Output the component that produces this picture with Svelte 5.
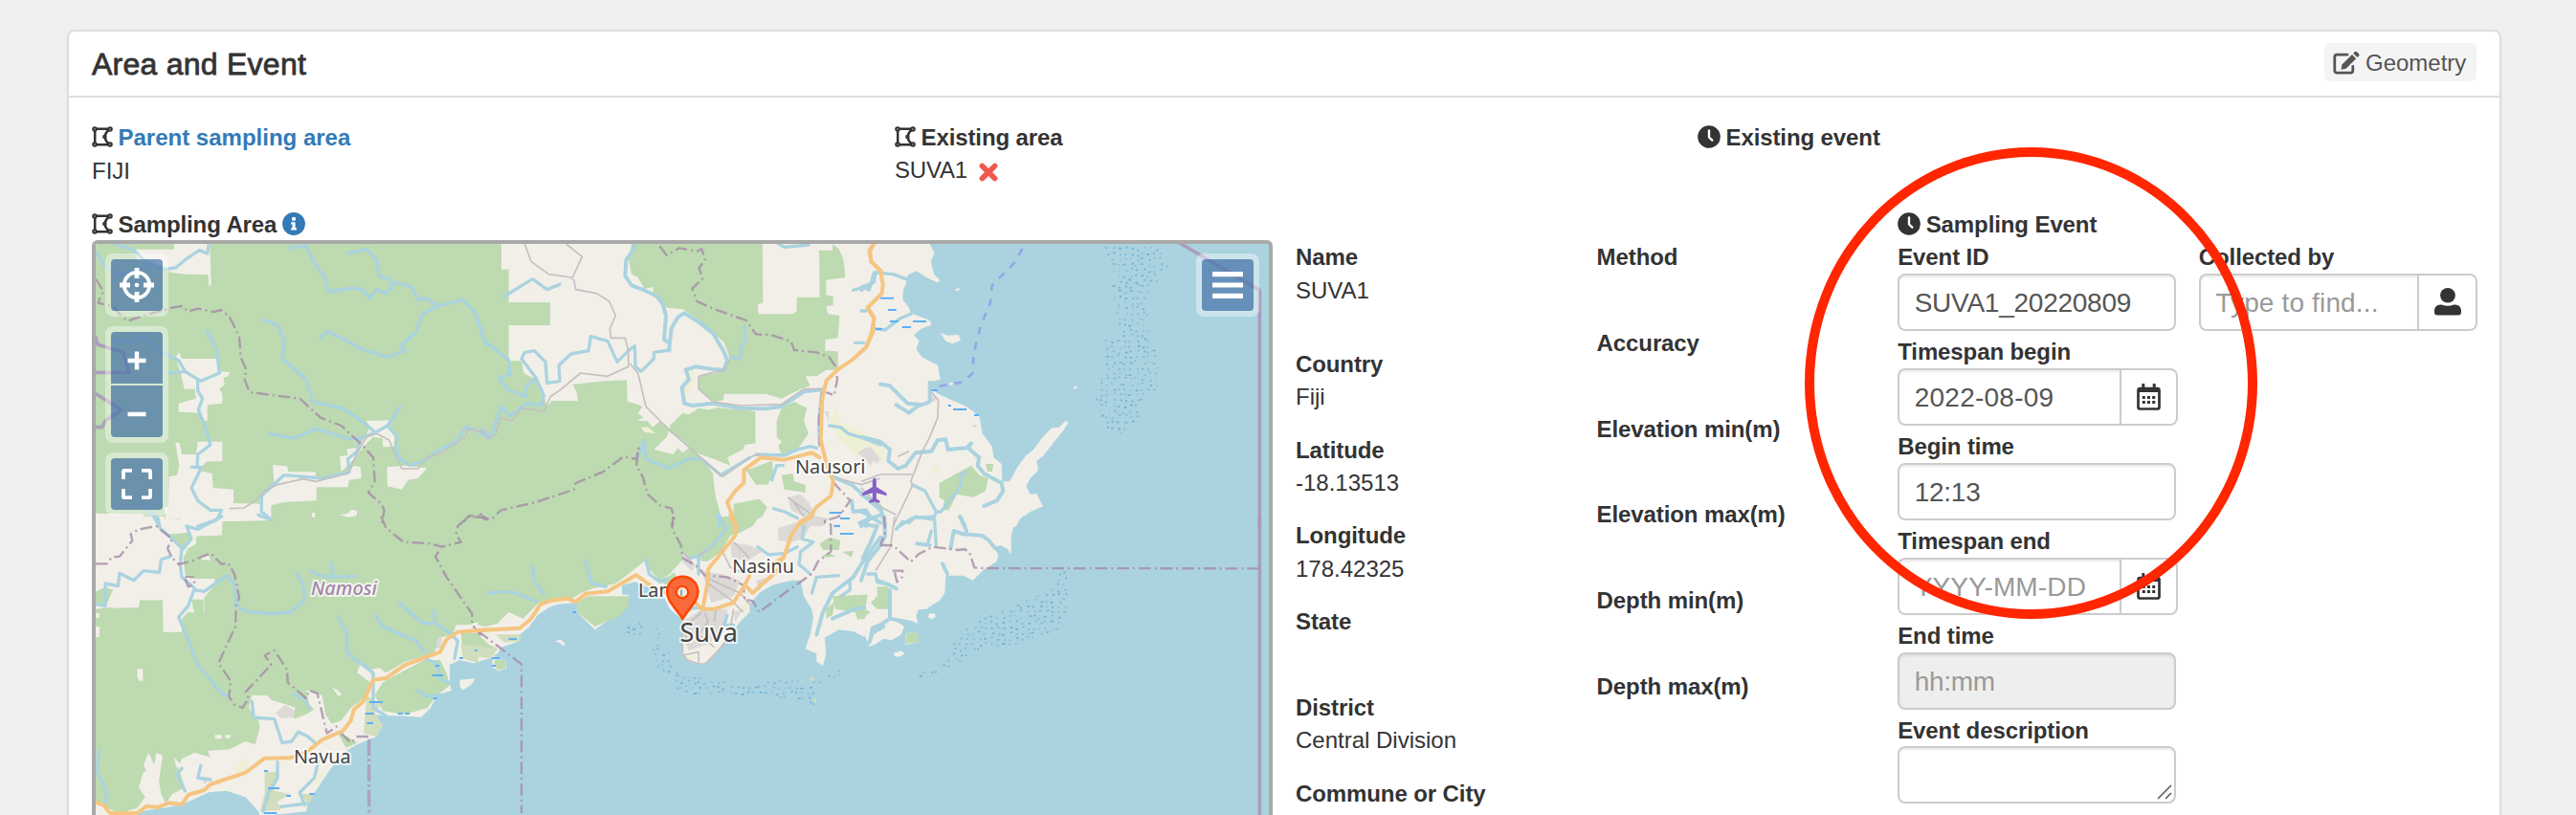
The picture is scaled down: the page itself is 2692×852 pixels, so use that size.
<script>
  // Each map tile has its own drawing grid at three units per pixel.
  const tiles = { A: [90, 240], B: [500, 240], C: [900, 240], D: [90, 540], E: [500, 540], F: [900, 540] };

  const layers = [
    { kind: 'land', shapes: {
      A: 'M0 0H1260V930H0Z',
      B: 'M0 0H1210V930H0Z',
      C: 'M-10 0H215V45L230 75L218 100L228 140L248 160L238 166L205 150L172 130L145 143L140 170L132 190L130 220L150 245L155 262L215 285L220 300L190 310L165 330L182 350L172 375L190 400L240 425L248 470L215 478L225 505L250 520L330 555L370 585L380 640L410 680L415 715L440 735L442 790L465 790L490 745L515 710L540 690L570 650L597 622L620 620L640 600L650 605L630 635L605 665L570 710L550 725L555 755L530 780L517 805L530 830L550 828L560 850L570 868L530 885L500 905L484 932H-10Z M248 323L270 332L305 330L312 348L285 358L265 350Z M275 480L288 480L286 488L276 488Z M667 491H676V499H667Z M295 186L310 184L308 190L296 192Z',
      D: 'M0 0H1280V440L1215 460L1170 450L1140 465V520L1145 545L1100 560L1080 600L1050 630L990 625L930 625L905 620L930 655L910 690L850 715L815 735L790 760L760 800L720 860L695 895L690 925L545 940L540 925L500 880L440 860L385 865L320 895L270 910L200 920L120 936H0Z M1172 512L1220 508L1210 525L1180 545L1172 532Z',
      E: 'M0 -5H1210V378L1205 375L1175 360L1130 355L1085 380L1090 430L1080 468L1060 455V430L1025 415L1040 370L1050 320L1045 290L1020 250L1010 200L980 200L920 215L880 240L850 275V300L820 330L790 370L765 400L730 445L700 465L660 455L640 430V325L600 290L580 250L540 225L490 205L450 215V245L470 245V270L440 310L400 330L365 355L330 320L310 300V270L250 275L220 285L185 310L160 345L130 370V390L70 410L60 430L30 445L0 440Z M240 390L258 386L272 398L268 406L254 396Z M45 448L85 450L88 475L65 485L42 472Z',
      F: 'M-5 -5H508L480 25L470 60L470 118L455 98L415 96L430 120L425 140L380 170L350 200L320 185L265 185L262 240L245 265L225 275L205 290L180 292L172 310L178 335L150 325L105 325L135 345L125 370L95 388L70 383L45 400L25 408L10 370L-5 370Z M212 305L230 303L233 315L220 322L210 316Z M102 428L125 421L137 430L120 440L104 438Z M140 370L160 360L180 370L178 393L137 403Z'
    } },
    { kind: 'forest', shapes: {
      A: 'M0 0H1231V901H0Z',
      B: 'M-1 0H65L72 60V125H95V228H225V300H95V412H135L142 450L180 470L205 520L215 555L230 537H312L308 510L295 485L400 475L465 472L467 540L490 545L515 555L500 575L518 590L495 600L530 600L545 620L570 600L600 625L590 650L550 690L610 705L625 685L640 700L660 685L700 715L735 765L742 830L760 901H-1Z M490 0H890L892 230L875 235L878 265H985L998 255V212H1070L1068 65L1110 65V45L1130 60L1145 95L1150 150L1090 158V205L1112 210V237L1090 240L1095 265L1132 270L1127 340L1087 345V380L1127 382V440L1090 440L1060 460L1025 460L1040 490L1010 500L950 530L900 515L770 515L768 535L740 540L690 500L692 460L750 450L790 410L770 355L700 290L640 250L590 245L570 215L545 200L550 180L520 185L500 150L480 140L470 90Z M600 615L640 575L660 580L690 560L720 565L750 558L868 570V670L835 675L830 690L780 715L790 740L740 720L680 700L640 660L600 635Z M935 600L950 560L990 540L1030 560L1020 600L1035 640L1000 690L950 705L940 680L950 665L935 650Z M840 755L920 725L925 770L905 800L870 800Z M800 860L880 845L905 870L890 900L830 930L800 915Z M950 770L985 765L990 790L1025 800L1025 825L960 815Z',
      C: 'M245 795L300 765L345 740L370 770L398 780L390 820L350 840L300 830L275 880L255 880L260 850L245 840Z M390 735L415 735L410 760L395 758Z',
      D: 'M428 15L535 10V0H1231V330L1200 340L1160 340L1150 370L1110 380L1090 430L1000 455L940 490L920 475L890 480L860 460L850 490L890 520L870 570L830 600L800 640L770 650L750 620L740 560L690 545L700 590L715 605L690 620L650 635L655 600L630 590L580 575L570 562L520 560L510 600L540 640L545 660L530 715L500 705L450 730L380 735L390 755L340 740L300 760L290 790L310 850L270 870L250 900L235 870L228 830L240 750L220 740L210 800L180 800L165 850L185 880L160 915L100 930L70 915L30 890V290L70 285H165L168 262H240L242 362H300L300 320L320 300L370 305V255L395 225L405 195L340 195L310 180L305 130L320 100L345 85V60L425 58Z M260 55L320 50L330 70L310 95L285 90Z M30 235L60 220L85 230L65 275L30 270Z M330 260H368V305H340Z M245 -2H300V8H248Z M930 520L1060 450L1110 450L1130 490L1140 530L1100 560L1070 600L1000 620L930 610L905 560Z M1175 365H1231V430L1180 420Z M790 680L820 690L850 710L815 725Z',
      E: 'M-1 0H880L860 30L820 50L790 60L760 110L720 140L700 140L690 120L640 135L600 180L570 200L540 170L520 140L470 180L430 210L360 225L320 240L290 260L240 255L190 270L140 320L95 300L60 335L20 345L-1 340Z M310 270L340 250H470V280L440 315L400 330L365 345L310 300Z M-1 370L30 400L60 415L40 440L-1 435Z M50 450H85V475L65 482L50 470Z M1070 85L1100 65L1135 75L1130 105L1080 105Z M1080 120L1100 115L1120 125L1085 128Z M1140 110L1175 108L1170 128Z M1110 250L1210 245V290L1230 300L1190 325L1180 300L1120 290Z M1090 290L1118 265L1110 310L1090 320Z M570 205L615 175L620 190L590 215Z',
      F: 'M-1 245H20L15 280L-1 290Z M30 270L50 250L50 220L85 220L93 290L50 290Z M-1 295L20 300L10 322H-1Z M142 370L160 360L180 370L178 393L137 400Z'
    } },
    { kind: 'swamp', shapes: {
      D: 'M880 560L925 590L905 615L930 655L910 690L870 680Z M560 800L600 800L590 860L640 870L600 895L610 920L545 925L560 870Z M670 870L715 870L700 900L680 885Z M1175 400L1230 405V460L1180 445Z',
      E: 'M0 405L60 415L40 445L0 440Z M55 370L130 370V390L80 395Z M1040 503L1052 503V516L1040 514Z M1050 570H1060V582H1052Z'
    } },
    { kind: 'pale', shapes: {
      B: 'M655 450L680 440L672 480L650 540L640 500Z M1100 590L1125 550L1135 600L1230 650L1260 660L1230 685L1190 710L1130 660Z M510 620L530 618L555 640L520 635Z M145 195L165 198L158 208Z',
      C: 'M0 650L60 670L75 700L70 735L40 700L0 680Z M225 740L245 745L240 765L222 760Z',
      D: 'M460 790L500 760L515 770L490 800L465 805Z M710 850L730 800L750 805L715 855Z',
      E: 'M815 280L840 270L848 280L835 300L815 302Z M650 430L685 440L670 450L655 445Z M775 85L785 80V95Z'
    } },
    { kind: 'clear', shapes: {
      A: 'M275 45H388L392 175L385 178L382 142L320 140L265 135L240 115L160 95L155 62L275 62Z M300 405H410L418 445L450 447L445 460L430 465L435 485L418 500L427 515V545L380 550V600L365 600L360 575L290 572V545L345 530L340 500L308 500L300 465L290 430L280 400L292 385Z M280 668H293L300 705H345L350 665H427V727H380L360 745L350 755L395 765L398 810L462 815V858L545 860V835L590 800L585 738L630 742L635 760L720 760L718 782L790 775L830 755L838 740L860 745L863 780L825 785L820 808H722V850L620 855L580 865V912L470 915H425V935L300 935L298 905L250 910L245 870H258L260 775L285 770L292 740Z M795 710L820 708L818 688L850 685L870 660L890 620L878 600L950 598L955 620L968 640L965 680L930 682V655L900 650L870 680L830 730L800 760Z M943 745L1000 740L1070 748L1040 780L1010 785L990 815L945 805Z M30 890L175 893L215 930L250 935H30Z M795 895L820 890L832 878L850 882L848 898L825 902Z M708 888H718V902H708Z',
      D: 'M30 -1H245V8H300V-1H425V58L345 62V85L320 100L310 95L330 70L320 50L260 55L285 90L300 130V165L250 262H168L165 285L85 287L65 275L85 230L60 220L30 235Z M160 478H178V515H166L160 500Z M30 303H42V318H30Z M30 345H42V378H30Z M404 685H425V697H404Z M435 685H452V695H437Z M770 535L790 545L803 560L790 562Z M360 128L385 122L390 138L362 135Z M180 780L195 740L210 770L225 830L215 850Z M265 725L275 755L300 780L285 790Z'
    } },
    { kind: 'urban', shapes: {
      B: 'M970 840L1010 830L1035 855L1060 900L1100 905L1080 930L1000 930L1020 900L980 880Z M1190 700L1220 680L1240 720L1230 740Z M1085 570H1098V600Z',
      C: 'M10 690L30 680L60 720L50 735L20 710Z M215 520L235 525L230 540L218 540Z M348 612H362V620L352 622Z',
      D: 'M595 615L625 590L655 610L650 630L610 633Z M360 815L395 820L370 840Z M1100 380L1115 375V410L1098 415Z',
      E: 'M940 35L1010 15L1040 30L1020 70L980 80L940 75Z M790 80L850 90L890 110L840 140L795 130Z M700 170L760 180L820 200L800 250L730 270L715 220Z M640 330L700 290L780 290L770 350L720 400L660 420L640 380Z M870 200L910 190L880 235Z M800 300L830 290L805 330Z M640 110L680 150L670 170L640 145Z'
    } },
    { kind: 'river wide', shapes: {
      B: 'M490 45L485 65L463 95L460 145L480 175L520 190L560 210L578 235L588 270L582 345L597 355M597 380L605 310L625 275L645 262L690 290L735 325L768 380L780 410L770 440L735 438L680 430L650 440L660 470L638 495L645 545L670 552L735 545L820 560L900 562L950 555L1020 508L1078 502L1068 600L1070 670M1110 775L1170 800L1260 880M1170 850L1175 885L1215 880L1225 900L1200 930',
      C: 'M0 830L60 870L75 930M0 650L60 665L90 690L85 725L115 750L140 740L170 700L220 695L240 660L265 658L272 690L330 685L345 670L335 685L370 715L365 740L385 765L440 795L445 820L425 850L385 867M0 885L25 895L15 930M310 900L325 930M215 480V540L175 555L150 575L110 550M60 485L90 490L130 530L145 545L190 550',
      E: 'M1260 65L1200 150L1175 190L1110 240L1080 300L1060 370M1230 0L1260 20M1110 320L1180 290L1210 285M1260 -5L1195 20M1270 345L1235 365L1225 395',
      F: 'M0 200L20 140L60 90L75 60L72 0M0 25L50 30L30 80L5 130M90 230V320L140 330L90 320L60 340L35 350L30 380M310 0L330 45M280 100L290 45L320 55L380 60L400 75L420 100L440 97M255 148L270 180M175 85L215 90M50 200L90 215L110 226'
    } },
    { kind: 'river', shapes: {
      A: 'M92 45L150 65L180 95L240 125L280 120L310 95L355 65L380 75L385 45M30 70L60 115L90 135L120 140L200 110M640 58L690 50L712 100L745 145L760 195L840 183L870 190L888 215L910 188L940 200L970 165L1020 180L1040 220L1065 215L1105 240L1180 220L1220 260L1245 340L1260 365M820 75L880 62L912 95L918 145L950 155L960 185M735 340L755 318L800 340L865 375L945 400L1000 380L985 365L1035 320L1055 265L1110 235M555 283L600 300L622 350L615 405L690 470L710 540L800 560L850 590L900 630M575 640L650 655L720 625L820 655L860 655L910 635L945 615L985 555M378 317L410 380L418 450L360 475L310 445L260 450M90 350L150 350L180 330L220 375L290 410L310 445L350 470L350 505L365 530L352 565L370 610L390 675L350 705L348 745L360 750L330 810L350 850L390 880L425 880L410 910L350 930M330 745H360M1260 655L1225 630L1190 620L1160 665L1110 690L1060 725L1015 740L985 720L970 690L975 650L945 615M860 655L850 695L820 720L825 760L740 780L620 770L550 835L550 885L580 910M180 865L195 885L225 905L230 930',
      B: 'M80 210L170 155L215 188L255 172M-5 275L20 350L95 410L98 455L65 465L90 500L150 525L150 490L175 470M200 550L205 520L180 465L135 405L145 385L175 380L210 415L215 482L255 475L252 425L290 390L345 380L352 335L405 350L435 415L470 380L490 365L492 430L510 445L550 405L550 385L600 378M200 550L150 545L100 585L70 555L40 650L10 625M500 715L520 660L525 720L600 748L660 718L700 720L760 770L850 715M870 705L960 708L1000 690L1040 680L1060 685M1100 615L1135 620L1160 640L1210 655L1260 675M925 875L960 885L1000 905M920 785L935 740L955 740M750 895L755 930M1175 190L1210 180L1225 190L1240 135M1200 255L1215 255M790 400L820 405L822 370L838 350L835 305M940 45L960 55L1035 48M1180 355H1208',
      C: 'M0 190L40 165L45 135L100 140L140 155M40 310L75 315L120 280L155 265M0 180L30 170M160 800L200 820L235 885L250 885L285 840L315 800L310 770L330 760M235 885L230 900L160 905L120 930',
      D: 'M210 -5L235 40L270 70L300 100L295 150L300 190L340 225L320 280L290 315L325 400L350 465L430 560L440 560M425 0L350 40L315 30L330 70L305 100M265 125L235 135L230 175L180 170L150 200L105 178L100 218L60 210L60 280L30 275M340 230L370 235L440 185L465 210L470 280L500 297L580 305L640 300L685 260L680 210L660 180M705 170L730 185L775 190L845 187M768 145L775 190M790 315L815 360L820 430L900 490L900 600L940 625M905 310L930 345L1035 390L1060 425M980 270L1055 335L1095 335L1140 365L1165 390L1155 445M1090 295L1095 335M520 580L525 630L590 635L615 710L645 705L665 675L695 690L720 712M735 740L715 820L670 865L685 905M650 558L685 575L700 600M40 735L35 800L65 860L60 895M300 790L285 810L310 860M360 780L350 820L390 825M1060 445L1100 460L1110 510L1150 525M1040 545L1070 565L1110 560M600 770L600 820L570 870L555 925M610 910L690 900M540 -5L580 10',
      E: 'M755 -5L775 40L735 90L690 125L660 130M525 135L535 180L570 205L590 195M170 155L175 200L205 245M30 240L100 235L180 265M335 140L355 210L400 220M690 125L690 180M875 95L910 120L960 115L1000 95M1020 30L1015 70L1050 80L1010 110L1005 150L1040 180M1130 185L1060 190L1045 240M640 310L660 290L690 285M780 310L770 340L800 340M1165 205V230L1135 250',
      F: 'M110 40L130 15L150 20L170 0L230 10L235 90M220 45L210 80M20 180L45 180L50 205L90 215'
    } },
    { kind: 'street', shapes: {
      A: 'M450 875L495 873L530 850L560 820L600 800L680 782L720 790L820 765L850 700L880 650L910 640L950 660L970 710L990 750L1040 750L1070 715L1115 700L1190 650L1195 625L1245 635L1260 655',
      B: 'M10 630L35 655L55 640L70 590L105 600L135 560L205 570L225 525L260 500L320 450L405 460L470 430L470 380L460 340L415 340L412 310L430 270L410 225L370 200L305 188L300 160L290 150L220 140L165 100L145 45M275 45L325 85L295 150M475 420L500 450L525 555L600 630L680 700L765 775L860 710L885 705M690 460L770 440L790 405M690 460V500L735 540L820 552L950 548L1020 500L1078 500M1125 780L1200 800L1260 780M970 840L1040 890M985 850L1020 900',
      C: 'M220 510L242 535L240 590L215 650L190 700L155 790L162 800L100 930M0 790L60 768H160M0 810L60 870L110 895M150 695L115 712',
      E: 'M640 330L640 430L655 450L690 462H712L770 400L790 350L800 290M640 435L690 425V460M660 400L640 350L700 300M710 300L720 330L690 370L740 410M745 285L740 330M720 210L790 260L830 300M710 190L820 240L850 275M760 100L790 160L840 180M800 80L850 130M640 110L670 145M690 120L730 100',
      F: 'M105 0L92 95L45 170'
    } },
    { kind: 'border', shapes: {
      A: 'M30 155L55 195L45 210L38 230L85 240L105 265L130 287L180 270L270 245L300 240L320 257L350 248L400 258L425 252L450 275L480 335L485 400L502 440L497 470L512 510L670 530L735 590L800 615L870 680L900 715L905 790L885 825L925 860L935 880L925 930M1185 915L1200 898L1240 897L1260 908',
      B: 'M568 52L590 80L630 58L685 68L700 60L710 95L692 120L702 155L670 185L685 225L740 250L840 285L870 328L915 330L980 350L990 378L1060 385L1100 400L1120 430L1125 470L1115 520L1090 510M5 890L20 910L45 905L70 880L180 855L300 815L305 795L390 760L455 712L495 720L502 685L495 740L515 775L530 830L570 865L605 875L615 910L605 930M1078 510L1068 590L1070 680M1110 790L1165 850L1130 900L1080 915',
      D: 'M30 148H65L80 128L105 125L145 75L140 55L165 40L220 30L270 70L255 100L270 130L290 150L330 140L390 115L425 150L445 145L465 180L480 255L470 280L468 345L415 460L453 515L448 565L465 590L490 600L510 570L500 550L580 465L560 435L590 420L630 480L632 520L690 570L700 545L725 555L755 680L790 655M310 195L320 220L340 210L335 190L310 188M800 680L830 710L850 690L890 690M925 0L940 35L995 80L1080 85L1115 95L1175 80L1160 55L1165 30L1200 0L1260 5M1105 110L1095 125L1130 190L1210 305V340L1240 375',
      E: 'M0 360L135 463V930M610 0L607 40L635 90L640 130L690 160L710 185L780 190L830 215L835 260L860 265L880 300L960 240L1045 180L1065 140L1105 110V25L1075 15',
      F: 'M60 90H100L155 142L180 118L225 95L305 105L325 102L340 115L355 160L380 162L1245 163M98 170H130L128 190L112 205L105 175M72 0L75 50L60 90'
    } },
    { kind: 'border strong', shapes: {
      A: 'M30 335L35 360L115 385L135 448H30M30 515L110 565L60 600L50 620H30',
      C: 'M995 40L1249 190V932',
      F: 'M1249 0V936'
    } },
    { kind: 'border coast', shapes: {
      D: 'M887 698V936'
    } },
    { kind: 'road', shapes: {
      B: 'M1240 45L1228 65L1230 100L1262 130M1260 205L1220 245L1240 280L1232 325L1215 370L1170 410L1125 440L1090 475L1078 530L1073 660L1090 730L1112 790L1105 835L1060 870L1040 900L1000 930M1070 715L1045 700L960 722L885 715L832 755V795L805 820L780 855L795 895L808 930',
      C: 'M40 45L25 65L32 100L60 130L68 170L65 200L20 245L40 275L37 320L15 370L-6 388',
      D: 'M30 897L55 905L75 930H160L190 908L225 912L260 898L300 903L320 873L370 858L390 840L500 803L560 758L640 757L690 740L740 700L805 672L830 640L840 605L870 578L900 512L940 507L1000 465L1110 425L1130 385L1165 362L1260 355',
      E: 'M0 357L130 350L165 320L195 275L230 263L275 257L305 267L335 242L405 235L495 183L530 210L600 245L670 260L700 290L740 290L800 270L835 215L850 185M835 215L860 240L885 215L910 195L940 165L960 120L980 60L1010 15L1045 0M960 125L900 165M790 -5L808 30L805 60L720 165L718 210L705 280'
    } },
    { kind: 'ferry', shapes: {
      C: 'M505 60L480 105L410 175L405 230L375 300L352 390L350 450L320 478L220 495'
    } },
    { kind: 'marsh', shapes: {
      B: 'M1100 888H1140M1135 906H1162M1245 312H1260M1115 929H1134',
      C: 'M60 215H102M162 288H204M90 288H116M128 306H156M46 312H66M288 564H330M354 582H369M218 504H240M272 552H282M84 252H110',
      D: 'M888 582H930M875 618H902M880 648H900M977 618H992M1000 618H1014M1085 498H1120M1094 468H1108M1170 444H1182M1088 570H1100M570 852H606M628 876H642M558 930H598M700 870H716M558 798H570M1217 420H1226',
      E: 'M95 384H120M42 444H66M42 468H54M295 300H306M1134 6H1164M1134 54H1176M1115 30H1134'
    } }
  ];

  // Reef areas in tile units; the dots are scattered inside each outline.
  const reefs = [
    { tile: 'C', poly: [[760, 48], [925, 48], [962, 105], [915, 170], [895, 240], [905, 350], [928, 400], [925, 490], [890, 530], [860, 600], [820, 640], [765, 620], [725, 560], [755, 430], [755, 335], [815, 340], [795, 280], [785, 140]] },
    { tile: 'F', poly: [[605, 150], [640, 170], [645, 240], [635, 300], [615, 350], [500, 400], [370, 415], [300, 460], [215, 495], [150, 535], [190, 480], [260, 460], [300, 370], [370, 315], [460, 285], [540, 235], [590, 230]] },
    { tile: 'E', poly: [[455, 340], [515, 330], [505, 370], [460, 368]] },
    { tile: 'E', poly: [[545, 340], [565, 345], [560, 420], [615, 420], [610, 480], [680, 495], [820, 530], [860, 520], [980, 500], [1020, 520], [1140, 475], [1145, 490], [1050, 530], [1060, 590], [990, 570], [850, 560], [620, 550], [600, 500], [555, 475], [540, 400]] }
  ];

  function inside(x, y, poly) {
    let hit = false;
    for (let i = 0, j = poly.length - 1; i < poly.length; j = i++) {
      const [xi, yi] = poly[i];
      const [xj, yj] = poly[j];
      if (yi > y !== yj > y && x < ((xj - xi) * (y - yi)) / (yj - yi) + xi) hit = !hit;
    }
    return hit;
  }

  function scatter(poly) {
    const dots = [];
    let n = 7;
    const next = () => (n = (n * 16807) % 2147483647) / 2147483647;
    for (let y = 40; y < 640; y += 17) {
      for (let x = 140; x < 1160; x += 19) {
        const px = x + next() * 13 - 6;
        const py = y + next() * 11 - 5;
        const tone = 0.3 + next() * 0.55;
        const w = 5 + next() * 4;
        if (inside(px, py, poly)) dots.push({ x: px, y: py, w, tone });
      }
    }
    return dots;
  }

  const place = (t) => `translate(${tiles[t][0]} ${tiles[t][1]}) scale(.33333)`;

  const towns = [
    { name: 'Nausori', x: 831, y: 495.3, size: 20.5, w: 73.5 },
    { name: 'Navua', x: 307, y: 798.3, size: 20.5, w: 59.5 },
    { name: 'Nasinu', x: 765.3, y: 599.3, size: 20.5, w: 64.5 },
    { name: 'Lami', x: 667, y: 624.3, size: 20.5, w: 45 },
    { name: 'Suva', x: 710.5, y: 670.7, size: 27, w: 60.5 }
  ];

  const locality = [
    ['Name', 'SUVA1', true],
    ['Country', 'Fiji'],
    ['Latitude', '-18.13513'],
    ['Longitude', '178.42325'],
    ['State', ''],
    ['District', 'Central Division'],
    ['Commune or City', '']
  ];
  const measures = ['Method', 'Accuracy', 'Elevation min(m)', 'Elevation max(m)', 'Depth min(m)', 'Depth max(m)'];
</script>

{#snippet areaIcon()}
  <svg class="area-icon" viewBox="0 0 22 22" width="22" height="22">
    <path d="M3.2 4v14M4 2.800h13M4 19.200h13M18 3.500Q14.500 6 13.300 11Q14.500 16 18 18.500" fill="none" stroke="#333" stroke-width="2.500" />
    <g fill="#bbb" stroke="#333" stroke-width="2">
      <circle cx="3" cy="3" r="1.800" /><circle cx="19" cy="3" r="1.800" /><circle cx="3" cy="19" r="1.800" /><circle cx="19" cy="19" r="1.800" /><circle cx="13.400" cy="11" r="1.300" />
    </g>
  </svg>
{/snippet}

{#snippet clockIcon()}
  <svg class="clock-icon" viewBox="0 0 24 24" width="24" height="24">
    <circle cx="12" cy="12" r="11.8" fill="#333" />
    <path d="M12 5.5V12.5L15.3 15.6" fill="none" stroke="#fff" stroke-width="2.4" stroke-linecap="round" stroke-linejoin="round" />
  </svg>
{/snippet}

{#snippet calendarIcon()}
  <svg viewBox="0 0 25 28" width="25" height="28">
    <path d="M6.8 1v5M18.2 1v5" stroke="#333" stroke-width="3" stroke-linecap="round" />
    <rect x="1.5" y="5" width="22" height="21.5" rx="2" fill="none" stroke="#333" stroke-width="2.7" />
    <path d="M1.5 4.5h22v4.5h-22z" fill="#333" />
    <path d="M5.8 14.4h3M11 14.4h3M16.2 14.4h3M5.8 19.6h3M11 19.6h3M16.2 19.6h3" stroke="#333" stroke-width="3" />
  </svg>
{/snippet}

<div class="page">
  <section class="card">
    <header>
      <h1>Area and Event</h1>
      <button class="geometry">
        <svg viewBox="0 0 28 25" width="28" height="25">
          <path d="M15 4.2H4.2A2.4 2.4 0 0 0 1.8 6.600V20.800A2.400 2.400 0 0 0 4.200 23.200H18.400A2.400 2.400 0 0 0 20.800 20.800V16.500" fill="none" stroke="#555" stroke-width="2.8" stroke-linecap="round" />
          <path d="M20 4L24.200 8.200L13.600 18.800L8.600 19.700L9.400 14.600Z" fill="#555" />
          <path d="M21.200 2.800L22.700 1.300a1.700 1.700 0 0 1 2.400 0L27 3.200a1.700 1.700 0 0 1 0 2.400L25.500 7.100Z" fill="#555" />
        </svg>
        <span>Geometry</span>
      </button>
    </header>

    <div class="body">
      <div class="summary">
        <div>
          <div class="label">{@render areaIcon()}<span class="link">Parent sampling area</span></div>
          <div class="value">FIJI</div>
        </div>
        <div>
          <div class="label">{@render areaIcon()}<span>Existing area</span></div>
          <div class="value with-remove">SUVA1
            <svg viewBox="0 0 20 20" width="20" height="20"><path d="M3.400 3.400L16.600 16.600M16.600 3.400L3.400 16.600" stroke="#f0584f" stroke-width="5.600" stroke-linecap="round" /></svg>
          </div>
        </div>
        <div>
          <div class="label">{@render clockIcon()}<span>Existing event</span></div>
        </div>
      </div>

      <div class="details">
        <div>
          <div class="label">
            {@render areaIcon()}<span>Sampling Area</span>
            <svg class="info" viewBox="0 0 24 24" width="24" height="24">
              <circle cx="12" cy="12" r="11.900" fill="#337ab7" />
              <circle cx="12" cy="6.900" r="2.100" fill="#fff" />
              <path d="M9.200 10.200h4.400v6h1.300v2.400H9.200v-2.400h1.300v-3.600H9.200z" fill="#fff" />
            </svg>
          </div>
          <div class="map">
            <svg class="terrain" viewBox="100 255 1226 597" width="1226" height="597">
              {#each layers as layer}
                {#each Object.entries(layer.shapes) as [t, d]}
                  <path class={layer.kind} {d} transform={place(t)} />
                {/each}
              {/each}
              {#each reefs as reef}
                <g transform={place(reef.tile)}>
                  {#each scatter(reef.poly) as dot}
                    <rect x={dot.x} y={dot.y} width={dot.w} height="5.500" rx="1.500" fill="#5fa9d6" opacity={dot.tone} />
                  {/each}
                </g>
              {/each}
              <path d="M913.800 499.500c1.200 0 2 2 2 4v5.500l10.700 6.500v2.800l-10.700-3v6l3.600 2.500v2.200l-5.600-1.500-5.600 1.500v-2.200l3.600-2.500v-6l-10.700 3v-2.800l10.700-6.500v-5.500c0-2 .8-4 2-4z" fill="#8461c4" />
              {#each towns as town}
                <text class="town" x={town.x} y={town.y} font-size={town.size} textLength={town.w} lengthAdjust="spacingAndGlyphs">{town.name}</text>
              {/each}
              <text class="province" x="325" y="621.500" textLength="69" lengthAdjust="spacingAndGlyphs">Namosi</text>
              <path d="M713.300 647C707 636 697.200 629 697.200 618.800a16.100 16.100 0 0 1 32.200 0C729.400 629 719.600 636 713.300 647Z" fill="#f96332" fill-opacity=".95" stroke="#ff4500" stroke-width="2.600" stroke-linejoin="round" />
              <circle cx="713" cy="619" r="6.200" fill="#eee9e2" stroke="#ff4500" stroke-width="2.200" />
              <path d="M712 623V616.500" stroke="#999" stroke-width="1.800" />
            </svg>
            <div class="control locate">
              <button aria-label="Locate">
                <svg viewBox="0 0 36 36" width="36" height="36">
                  <circle cx="18" cy="18" r="13.200" fill="none" stroke="#fff" stroke-width="3.800" />
                  <path d="M18 0v11M18 25v11M0 18h11M25 18h11" stroke="#fff" stroke-width="4.800" />
                  <circle cx="18" cy="18" r="2.300" fill="#fff" />
                </svg>
              </button>
            </div>
            <div class="control zoom">
              <button aria-label="Zoom in"><svg viewBox="0 0 20 20" width="20" height="20"><path d="M10 .5v19M.5 10h19" stroke="#fff" stroke-width="4.400" /></svg></button>
              <button aria-label="Zoom out"><svg viewBox="0 0 20 20" width="20" height="20"><path d="M.5 10h19" stroke="#fff" stroke-width="4.600" /></svg></button>
            </div>
            <div class="control full">
              <button aria-label="Full screen"><svg viewBox="0 0 32 32" width="32" height="32"><path d="M1.900 11V3Q1.900 1.900 3 1.900H11M21 1.900H29Q30.100 1.900 30.100 3V11M1.900 21V29Q1.900 30.100 3 30.100H11M21 30.100H29Q30.100 30.100 30.100 29V21" fill="none" stroke="#fff" stroke-width="3.900" /></svg></button>
            </div>
            <div class="control layers">
              <button aria-label="Layers"><svg viewBox="0 0 32 28" width="32" height="28"><path d="M0 2.700h32M0 14h32M0 25.300h32" stroke="#fff" stroke-width="5.200" /></svg></button>
            </div>
          </div>
        </div>

        <div class="facts">
          {#each locality as [name, value, spaced]}
            <div class="fact" class:spaced>
              <div class="label"><span>{name}</span></div>
              <div class="value">{value}</div>
            </div>
          {/each}
        </div>

        <div class="facts">
          {#each measures as name}
            <div class="fact"><div class="label"><span>{name}</span></div></div>
          {/each}
        </div>

        <div class="event">
          <div class="label">{@render clockIcon()}<span>Sampling Event</span></div>
          <div class="field"><div class="label"><span>Event ID</span></div><div class="input">SUVA1_20220809</div></div>
          <div class="field"><div class="label"><span>Timespan begin</span></div>
            <div class="group"><div class="input date">2022-08-09</div><div class="addon">{@render calendarIcon()}</div></div></div>
          <div class="field"><div class="label"><span>Begin time</span></div><div class="input">12:13</div></div>
          <div class="field"><div class="label"><span>Timespan end</span></div>
            <div class="group"><div class="input hint">YYYY-MM-DD</div><div class="addon">{@render calendarIcon()}</div></div></div>
          <div class="field last"><div class="label"><span>End time</span></div><div class="input hint time disabled">hh:mm</div></div>
          <div class="field"><div class="label"><span>Event description</span></div>
            <div class="input area">
              <svg viewBox="0 0 16 16" width="16" height="16"><path d="M1 15L15 1M9 15L15 9" stroke="#555" stroke-width="1.500" /></svg>
            </div></div>
        </div>

        <div class="facts">
          <div class="field"><div class="label"><span>Collected by</span></div>
            <div class="group wide"><div class="input hint">Type to find...</div>
              <div class="addon"><svg viewBox="0 0 28 29" width="28" height="29"><ellipse cx="14" cy="7.800" rx="7.900" ry="7.800" fill="#333" /><path d="M0 25v-1.500a6 6 0 0 1 6-6h1.600q6.400 2.600 12.800 0H22a6 6 0 0 1 6 6V25.500q0 3-3 3H3q-3 0-3-3z" fill="#333" /></svg></div></div></div>
        </div>
      </div>
    </div>
  </section>
  <div class="highlight"></div>
</div>

<style>
  :global(body) { margin: 0; background: #efefef; }
  .page {
    position: relative;
    box-sizing: border-box;
    width: 2692px;
    height: 852px;
    padding: 31px 78px 0 70px;
    overflow: hidden;
    background: #efefef;
    color: #333;
    font: 24px/34.3px "Liberation Sans", Arial, sans-serif;
  }
  .card {
    box-sizing: border-box;
    height: 900px;
    border: 2px solid #ddd;
    border-radius: 8px;
    background: #fff;
    box-shadow: 0 2px 2px rgba(0, 0, 0, .05);
  }
  header {
    display: flex;
    box-sizing: border-box;
    height: 69px;
    padding: 0 24px;
    align-items: center;
    justify-content: space-between;
    border-bottom: 2px solid #ddd;
  }
  h1 {
    margin: 1px 0 0;
    font-size: 32px;
    font-weight: 400;
    letter-spacing: .25px;
    -webkit-text-stroke: .8px #333;
  }
  button { margin: 0; border: 0; font: inherit; }
  .geometry {
    display: flex;
    width: 159px;
    height: 40px;
    margin-top: -3px;
    padding: 0 10px 0 9px;
    align-items: center;
    gap: 6px;
    border-radius: 6px;
    background: #f4f4f4;
    color: #555;
  }
  .geometry svg { flex: none; }
  .geometry span { padding-top: 2px; }
  .body { padding: 24.300px 24px 0; }
  .summary { display: grid; grid-template-columns: 839px 839px 1fr; height: 90.800px; }
  .label { display: flex; height: 34.300px; align-items: center; font-weight: 700; letter-spacing: -.1px; white-space: nowrap; }
  .label span { padding-top: 2px; }
  .value { box-sizing: border-box; height: 34.300px; padding-top: 1px; white-space: nowrap; }
  .link { color: #337ab7; letter-spacing: 0; }
  .area-icon { flex: none; margin: 0 6px 0 -.5px; }
  .clock-icon { flex: none; margin: 0 6px 0 -.5px; }
  .info { margin-left: 6px; }
  .with-remove { display: flex; align-items: center; gap: 12px; letter-spacing: -.2px; }
  .with-remove svg { margin-top: 3px; }
  .details { display: grid; grid-template-columns: 1234px 290.600px 290.600px 290.600px 291px; column-gap: 24px; }
  .map {
    position: relative;
    box-sizing: border-box;
    width: 1234px;
    height: 640px;
    margin-top: -.5px;
    border: 4px solid #a9a9a9;
    border-radius: 6px;
    background: #aad3df;
    overflow: hidden;
  }
  .terrain { display: block; }
  .land, .clear { fill: #f2efe9; }
  .forest { fill: #bddab1; }
  .swamp { fill: #d0debd; }
  .pale { fill: #eef0d5; }
  .urban { fill: #dcd9d7; }
  .river { fill: none; stroke: #aad3df; stroke-width: 10; stroke-linejoin: round; stroke-linecap: round; }
  .river.wide { stroke-width: 12; }
  .street { fill: none; stroke: #c4c0c1; stroke-width: 5; stroke-linejoin: round; }
  .border { fill: none; stroke: #a58ba5; stroke-opacity: .8; stroke-width: 7; stroke-dasharray: 38 12 6 12; stroke-linejoin: round; }
  .border.strong { stroke: #a998bd; stroke-opacity: .9; stroke-width: 11; stroke-dasharray: none; }
  .border.coast { stroke: #a998bd; stroke-width: 11; stroke-dasharray: 52 10 8 10; }
  .road { fill: none; stroke: #f5c581; stroke-width: 12; stroke-linejoin: round; stroke-linecap: round; }
  .ferry { fill: none; stroke: #93a8e6; stroke-width: 8; stroke-dasharray: 24 24; }
  .marsh { fill: none; stroke: #5eaef2; stroke-width: 6; }
  .town, .province {
    font-family: "Noto Sans", sans-serif;
    fill: #444;
    stroke: #fff;
    stroke-opacity: .75;
    stroke-width: 4px;
    stroke-linejoin: round;
    paint-order: stroke;
  }
  .province { fill: #a984a9; font-size: 20.500px; font-style: italic; font-weight: 500; }
  .control {
    position: absolute;
    display: flex;
    flex-direction: column;
    gap: 2px;
    padding: 6px;
    border-radius: 8px;
    background: rgba(255, 255, 255, .4);
  }
  .control button {
    display: grid;
    width: 54px;
    height: 54px;
    padding: 0;
    place-items: center;
    border-radius: 4px;
    background: rgba(0, 60, 136, .5);
  }
  .zoom button { padding-top: 7px; }
  .zoom button:first-child { border-radius: 4px 4px 0 0; }
  .zoom button:last-child { border-radius: 0 0 4px 4px; }
  .locate { left: 10px; top: 10px; }
  .zoom { left: 10px; top: 86px; }
  .full { left: 10px; top: 218px; }
  .layers { right: 10px; top: 10px; }
  .facts { padding-top: 34.300px; }
  .fact { height: 89.700px; }
  .fact.spaced { height: 111.700px; }
  .field { height: 99px; }
  .field.last { height: 98.500px; }
  .input {
    box-sizing: border-box;
    width: 290.600px;
    height: 60px;
    padding: 0 15.500px;
    border: 2px solid #ccc;
    border-radius: 8px;
    background: #fff;
    box-shadow: inset 0 2px 2px rgba(0, 0, 0, .075);
    color: #555;
    font-size: 28px;
    line-height: 57px;
    letter-spacing: -.25px;
    white-space: nowrap;
  }
  .input.date { letter-spacing: .25px; }
  .hint { color: #999; letter-spacing: .15px; }
  .input.time { letter-spacing: -.3px; }
  .disabled { background: #eee; }
  .area { display: flex; justify-content: flex-end; align-items: flex-end; padding: 0 2px 2px; }
  .group { display: flex; width: 292.500px; }
  .group .input { width: 231.500px; border-right: 0; border-radius: 8px 0 0 8px; }
  .group.wide { width: 291.500px; }
  .group.wide .input { width: 228px; }
  .addon {
    display: grid;
    box-sizing: border-box;
    flex: 1;
    height: 60px;
    place-items: center;
    border: 2px solid #ccc;
    border-radius: 0 8px 8px 0;
    background: #fff;
  }
  .highlight {
    position: absolute;
    box-sizing: border-box;
    left: 1886px;
    top: 154px;
    width: 473px;
    height: 493px;
    border: 10px solid #ff2600;
    border-radius: 50%;
  }
</style>
